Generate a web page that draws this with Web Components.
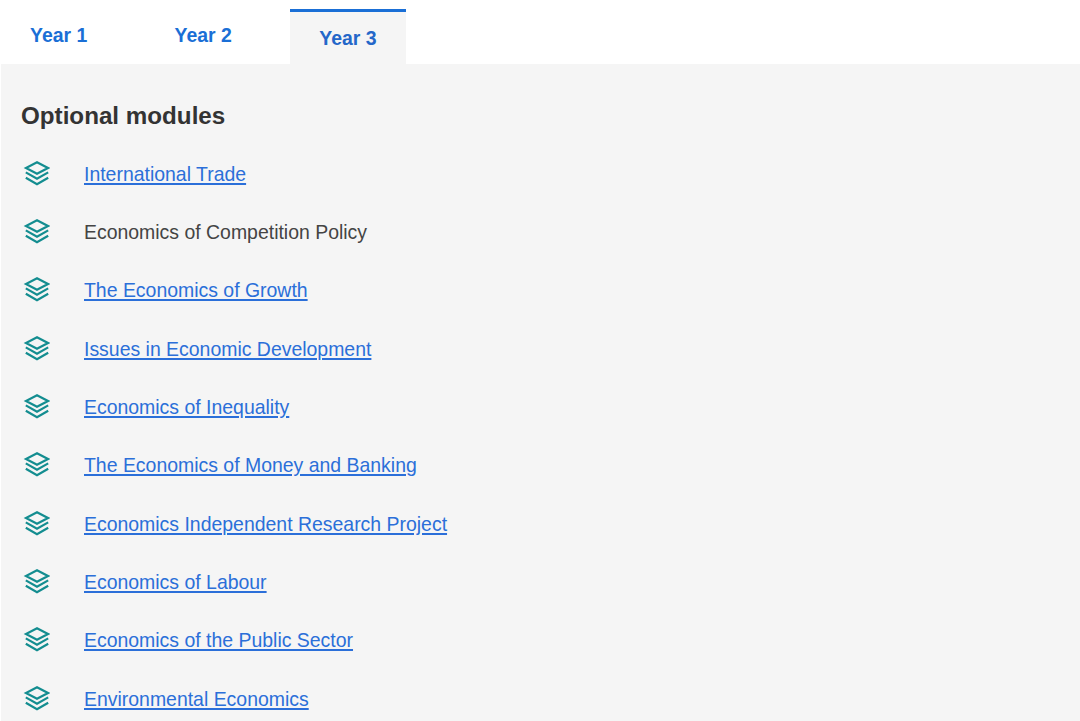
<!DOCTYPE html>
<html lang="en">
<head>
<meta charset="utf-8">
<title>Modules</title>
<style>
  html, body { margin: 0; padding: 0; background: #fff; height: 721px; overflow: hidden; }
  body { font-family: "Liberation Sans", Arial, sans-serif; }
</style>
</head>
<body>
<year-tabs>
  <tab-item>Year 1</tab-item>
  <tab-item>Year 2</tab-item>
  <tab-item active>Year 3</tab-item>
</year-tabs>
<module-panel heading="Optional modules">
  <module-row href="#">International Trade</module-row>
  <module-row>Economics of Competition Policy</module-row>
  <module-row href="#">The Economics of Growth</module-row>
  <module-row href="#">Issues in Economic Development</module-row>
  <module-row href="#">Economics of Inequality</module-row>
  <module-row href="#">The Economics of Money and Banking</module-row>
  <module-row href="#">Economics Independent Research Project</module-row>
  <module-row href="#">Economics of Labour</module-row>
  <module-row href="#">Economics of the Public Sector</module-row>
  <module-row href="#">Environmental Economics</module-row>
</module-panel>
<script>
'use strict';

class YearTabs extends HTMLElement {
  constructor() {
    super();
    this.attachShadow({mode: 'open'}).innerHTML = `<style>
        :host {
          display: flex;
          gap: 29px;
          height: 64px;
          padding-left: 1px;
          box-sizing: border-box;
          align-items: flex-end;
        }
      </style><slot></slot>`;
  }
}

class TabItem extends HTMLElement {
  constructor() {
    super();
    this.attachShadow({mode: 'open'}).innerHTML = `<style>
        :host {
          display: block;
          width: 115.5px;
          height: 55px;
          box-sizing: border-box;
          padding-top: 14px;
          text-align: center;
          font-size: 19.44px;
          line-height: 24px;
          font-weight: bold;
          color: #1a6fd6;
        }
        :host([active]) {
          width: 116px;
          padding-top: 14px;
          background: #f5f5f5;
          border-top: 3px solid #1a6fd6;
          color: #2467c9;
        }
      </style><slot></slot>`;
  }
}

class ModulePanel extends HTMLElement {
  constructor() {
    super();
    this.attachShadow({mode: 'open'}).innerHTML = `<style>
        :host {
          display: block;
          margin-left: 1px;
          height: 657px;
          box-sizing: border-box;
          padding: 36px 20px 0;
          background: #f5f5f5;
          overflow: hidden;
        }
        h2 {
          margin: 0 0 13px;
          font-size: 24.2px;
          line-height: 32px;
          font-weight: bold;
          color: #333;
        }
        .list {
          display: grid;
          grid-auto-rows: 58.33px;
        }
      </style><h2></h2><div class="list"><slot></slot></div>`;
  }
  connectedCallback() {
    this.shadowRoot.querySelector('h2').textContent = this.getAttribute('heading');
  }
}

class ModuleRow extends HTMLElement {
  constructor() {
    super();
    this.attachShadow({mode: 'open'}).innerHTML = `<style>
        :host {
          display: flex;
          align-items: center;
          gap: 34px;
          height: 58.33px;
          font-size: 19.44px;
          color: #444;
        }
        svg {
          flex: none;
          width: 29px;
          height: 29px;
          margin-top: -2px;
        }
        a {
          color: #2b6fd9;
          text-decoration: underline;
          text-decoration-thickness: 2px;
          text-underline-offset: 2px;
        }
      </style><svg viewBox="0 0 29 29" fill="none" stroke="#138d90" stroke-width="2.2" stroke-linejoin="miter">
        <path d="M16 3.2 L27 9 L16 14.8 L5 9 Z"/>
        <path d="M4.8 13.4 L16 19.8 L27.2 13.4"/>
        <path d="M4.8 18.8 L16 25.2 L27.2 18.8"/>
      </svg><span class="label"></span>`;
  }
  connectedCallback() {
    let label = this.shadowRoot.querySelector('.label');
    if (this.hasAttribute('href')) {
      let link = document.createElement('a');
      link.href = this.getAttribute('href');
      link.textContent = this.textContent;
      label.appendChild(link);
    } else {
      label.textContent = this.textContent;
    }
  }
}

customElements.define('year-tabs', YearTabs);
customElements.define('tab-item', TabItem);
customElements.define('module-panel', ModulePanel);
customElements.define('module-row', ModuleRow);
</script>
</body>
</html>
